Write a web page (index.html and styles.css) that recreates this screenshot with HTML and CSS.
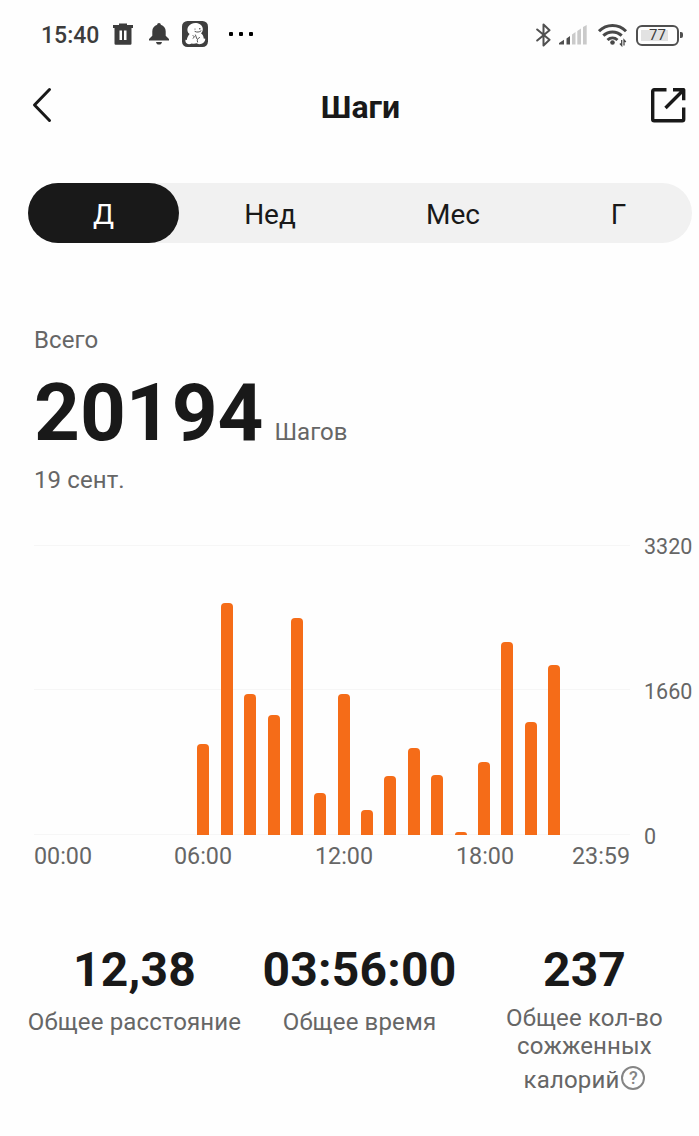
FILE: index.html
```html
<!DOCTYPE html>
<html lang="ru">
<head>
  <meta charset="UTF-8" />
  <title>Шаги</title>
  <link rel="stylesheet" href="styles.css">
</head>
<body>

  <div class="status-bar">
    <span class="clock">15:40</span>
    <svg class="icon-trash" width="22" height="22" viewBox="0 0 22 22">
      <path fill="#3c3c3c" fill-rule="evenodd" d="M1 2h6V0.500h8V2h6v3h-1.500v15.500a1.200 1.200 0 0 1-1.200 1.200H3.700a1.200 1.200 0 0 1-1.200-1.200V5H1zM7.500 7.500v9.500h2.500v-9.500zM12 7.500v9.500h2.500v-9.500z" />
    </svg>
    <svg class="icon-bell" width="20" height="22" viewBox="0 0 20 22">
      <path fill="#3c3c3c" d="M10 0c1.100 0 1.800.8 1.800 1.800 3 .9 4.900 3.300 4.900 6.400v4.500l3.300 3.200v1.500H0v-1.500l3.300-3.200V8.200c0-3.100 1.900-5.500 4.900-6.400C8.200.8 8.900 0 10 0zM7 19h6c-.3 1.700-1.300 2.600-3 2.600S7.300 20.700 7 19z" />
    </svg>
    <svg class="icon-app" width="26" height="26" viewBox="0 0 26 26">
      <rect width="26" height="26" rx="5.500" fill="#3f3f3f" />
      <path fill="#fff" d="M6 6C8 3 11 1.600 14.500 2c3.500.4 6.200 2.800 6.300 6 .1 2-.7 3.300-1.800 4.200 1.700 1.400 2.700 3.200 2.700 5.200l1.600.3c-.1 2.300-1.400 4.300-3.700 5.100-1.900.8-3.500.6-4.800-.5-2.100.5-3.700.4-5 .1-1.700 1-3.700 1-4.900.2-1.300-.9-1.700-2.400-1.400-3.900l1.300.4c.3-2.600 1.400-4.600 2.800-6.100C5.300 11.500 4.800 8.500 6 6z" />
      <path fill="none" stroke="#3f3f3f" stroke-width="0.900" stroke-linecap="round" d="M13 10.500c2 1 4.200.8 6-.6M11 14.500l1.500 1.500-1.500 1.200M13.500 14l1.200 3.500M15.500 21c-.8-2 .2-4 2-4.500" />
      <circle cx="17.800" cy="7.800" r="0.800" fill="#3f3f3f" />
      <circle cx="13" cy="8" r="0.600" fill="#3f3f3f" />
    </svg>
    <div class="more"><i></i><i></i><i></i></div>

    <div class="status-right">
      <svg class="icon-bluetooth" width="15" height="24" viewBox="0 0 15 24">
        <path fill="none" stroke="#505050" stroke-width="2" stroke-linejoin="round" stroke-linecap="round" d="M1.200 6.500l12.300 10.300L7.500 22.500V1.500l6 5.700L1.200 17.500" />
      </svg>
      <svg class="icon-signal" width="28" height="20" viewBox="0 0 28 20">
        <path fill="#505050" d="M0 19.500v-1.500L5 14.800v4.700zM7.500 13.500L11 11v8.500H7.500z" />
        <path fill="#cacaca" d="M13 9.500L16.500 7v12.500H13zM18.300 6L22 3.500v16h-3.700zM24 2l3.700-2v19.500H24z" />
      </svg>
      <svg class="icon-wifi" width="30" height="24" viewBox="0 0 30 24">
        <g fill="none" stroke="#484848" stroke-width="3">
          <path d="M1 8.200C8.500 0.700 20.500 0.700 28 8.200" />
          <path d="M5.300 12.700c5.300-5 13.100-5 18.400 0" />
          <path d="M9.500 17c3-2.700 7-2.700 10 0" />
        </g>
        <circle cx="14.500" cy="19.500" r="2.300" fill="#484848" />
        <path fill="none" stroke="#484848" stroke-width="1.300" d="M23.700 17v5.500l-1.800-2M26 22.500V17l1.800 2" />
      </svg>
      <div class="battery"><span>77</span></div>
    </div>
  </div>

  <div class="header">
    <svg width="20" height="36" viewBox="0 0 20 36">
      <path fill="none" stroke="#191919" stroke-width="3" stroke-linecap="round" stroke-linejoin="round" d="M17.500 2.500L2.500 18l15 15.500" />
    </svg>
    <h1>Шаги</h1>
    <svg width="36" height="36" viewBox="0 0 36 36">
      <path fill="none" stroke="#191919" stroke-width="3.400" stroke-linejoin="round" d="M16.500 2.700H4.200a1.500 1.500 0 0 0-1.500 1.500v28a1.500 1.500 0 0 0 1.500 1.500h28a1.500 1.500 0 0 0 1.500-1.500V20.500M23 2.700h10.700v10.500M33.500 3L15.500 21" />
    </svg>
  </div>

  <div class="tabs">
    <div class="tab active">Д</div>
    <div class="tab">Нед</div>
    <div class="tab">Мес</div>
    <div class="tab">Г</div>
  </div>

  <div class="summary">
    <div class="label">Всего</div>
    <div class="total"><b>20194</b><span>Шагов</span></div>
    <div class="label">19 сент.</div>
  </div>

  <div class="chart">
    <div class="plot" id="plot"></div>
    <div class="y-axis">
      <span>3320</span>
      <span>1660</span>
      <span>0</span>
    </div>
    <div class="x-axis">
      <span>00:00</span>
      <span>06:00</span>
      <span>12:00</span>
      <span>18:00</span>
      <span>23:59</span>
    </div>
  </div>

  <div class="stats">
    <div class="stat">
      <b>12,38</b>
      <p>Общее расстояние</p>
    </div>
    <div class="stat">
      <b>03:56:00</b>
      <p>Общее время</p>
    </div>
    <div class="stat calories">
      <b>237</b>
      <p>Общее кол-во<br />сожженных</p>
      <p class="last">калорий<i class="help">?</i></p>
    </div>
  </div>

  <script>
    // steps per hour, 0..23
    const steps = [0, 0, 0, 0, 0, 0, 1042, 2656, 1610, 1374, 2487, 477, 1614, 286, 677, 992, 683, 40, 836, 2206, 1290, 1947, 0, 0];
    const max = 3320;
    const plot = document.getElementById('plot');

    steps.forEach(value => {
      const bar = document.createElement('div');
      bar.classList.add('bar');
      bar.style.height = (value / max * 100) + '%';
      plot.appendChild(bar);
    });
  </script>
</body>
</html>
```
FILE: styles.css
```css
html, body {
  margin: 0;
  padding: 0;
}

body {
  width: 699px;
  height: 1136px;
  overflow: hidden;
  background-color: #fefefe;
  color: #191919;
  font-family: Roboto, "Liberation Sans", sans-serif;
}

svg {
  display: block;
  flex: none;
}

.status-bar {
  display: flex;
  align-items: center;
  height: 70px;
  box-sizing: border-box;
  padding: 0 20px 0 41px;
}

.clock {
  width: 58px;
  margin-right: 13px;
  color: #3c3c3c;
  font-size: 23px;
  font-weight: 500;
}

.icon-trash,
.icon-bell,
.icon-app {
  margin-top: -2px;
}

.icon-bell {
  margin-left: 15px;
}

.icon-app {
  margin-left: 13px;
}

.more {
  display: flex;
  gap: 6px;
  margin: -2px 0 0 21px;
}

.more i {
  width: 4px;
  height: 4px;
  border-radius: 1px;
  background-color: #000;
}

.status-right {
  display: flex;
  align-items: center;
  margin-left: auto;
}

.icon-signal {
  margin-left: 8px;
}

.icon-wifi {
  margin-left: 11px;
}

.battery {
  position: relative;
  width: 43px;
  height: 21px;
  box-sizing: border-box;
  margin-left: 8px;
  border: 2.5px solid #505050;
  border-radius: 6px;
  background: linear-gradient(to right, #e2e2e2 27px, transparent 27px) 3px 3px / 27px 11px no-repeat;
  color: #3c3c3c;
  font-size: 15px;
  line-height: 17px;
  text-align: center;
}

.battery::after {
  content: "";
  position: absolute;
  right: -6px;
  top: 5px;
  width: 3px;
  height: 6px;
  border-radius: 0 2px 2px 0;
  background-color: #505050;
}

.header {
  display: flex;
  align-items: center;
  justify-content: space-between;
  height: 70px;
  padding: 0 13px 0 32px;
}

.header h1 {
  margin: 4px 0 0 19px;
  font-size: 32px;
  font-weight: 700;
}

.tabs {
  display: grid;
  grid-template-columns: 151px 182px 184px 147px;
  width: 664px;
  height: 60px;
  margin: 43px 0 0 28px;
  border-radius: 30px;
  background-color: #f1f1f1;
}

.tab {
  height: 60px;
  border-radius: 30px;
  font-size: 28px;
  line-height: 63px;
  text-align: center;
}

.tab.active {
  background-color: #191919;
  color: #fff;
}

.summary {
  padding: 82px 0 0 34px;
}

.label {
  color: #666;
  font-size: 24px;
  line-height: 30px;
  letter-spacing: 0.1px;
}

.total {
  display: flex;
  align-items: baseline;
  height: 110px;
}

.total b {
  font-size: 80px;
  line-height: 116px;
}

.total span {
  margin-left: 11px;
  color: #666;
  font-size: 24px;
}

.chart {
  display: grid;
  grid-template-columns: 596px 1fr;
  grid-template-rows: 290px 41px;
  padding: 50px 0 0 34px;
  color: #666;
  font-size: 23.3px;
}

.plot {
  display: grid;
  grid-template-columns: repeat(24, 12px);
  justify-content: space-between;
  align-items: end;
  padding: 0 23px;
  background:
    linear-gradient(#f6f6f6, #f6f6f6) 0 0 / 100% 1px no-repeat,
    linear-gradient(#f6f6f6, #f6f6f6) 0 144px / 100% 1px no-repeat,
    linear-gradient(#f6f6f6, #f6f6f6) 0 100% / 100% 1px no-repeat;
}

.bar {
  border-radius: 4px 4px 0 0;
  background-color: #f56c18;
}

.y-axis {
  display: flex;
  flex-direction: column;
  justify-content: space-between;
  margin: -12px 0 -16px;
  padding-left: 14px;
  font-size: 21.5px;
  line-height: 28px;
}

.x-axis {
  display: grid;
  grid-template-columns: 140px 141px 141px 116px 58px;
  line-height: 43px;
}

.stats {
  display: grid;
  grid-template-columns: 225px 225px 225px;
  margin: 62px 0 0 22px;
  text-align: center;
}

.stat b {
  display: block;
  font-size: 48px;
  line-height: 64px;
  letter-spacing: 0.2px;
}

.stat p {
  margin: 6px 0 0;
  color: #666;
  font-size: 24px;
  line-height: 28px;
  letter-spacing: 0.15px;
}

.calories p {
  margin-top: 2px;
}

.calories .last {
  display: flex;
  justify-content: center;
  margin-top: 6px;
}

.help {
  width: 24px;
  height: 24px;
  box-sizing: border-box;
  margin-left: 2px;
  border: 2px solid #858585;
  border-radius: 50%;
  color: #858585;
  font-size: 18px;
  font-style: normal;
  font-weight: 500;
  line-height: 20px;
}
```
